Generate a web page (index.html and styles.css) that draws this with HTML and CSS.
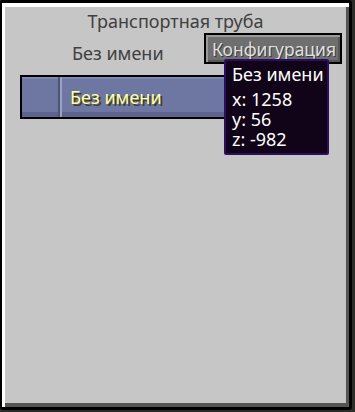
FILE: index.html
```html
<!DOCTYPE html>
<html lang="ru">
<head>
<meta charset="utf-8">
<title>Транспортная труба</title>
<link rel="stylesheet" href="styles.css">
</head>
<body>
<div class="panel">
  <div class="title">Транспортная труба</div>
  <div class="toolbar">
    <span class="name">Без имени</span>
    <div class="btn"><span class="btn-text">Конфигурация</span></div>
  </div>
  <div class="list">
    <div class="row">
      <div class="slot"></div>
      <div class="row-label">Без имени</div>
    </div>
  </div>
  <div class="tooltip">
    <div class="tip-title">Без имени</div>
    <div class="tip-line">x: 1258</div>
    <div class="tip-line">y: 56</div>
    <div class="tip-line">z: -982</div>
  </div>
</div>
</body>
</html>
```

FILE: styles.css
```css
html, body {
  margin: 0;
  padding: 0;
}
body {
  width: 355px;
  height: 412px;
  background: #2c2c29;
  font-family: "Noto Sans", "Open Sans", sans-serif;
  font-size: 18px;
  line-height: 20px;
  overflow: hidden;
}
.panel {
  position: relative;
  box-sizing: border-box;
  width: 352px;
  height: 410px;
  background: #c6c6c6;
  border-style: solid;
  border-color: #000;
  border-width: 3px 3px 3px 2px;
  border-radius: 3px;
  box-shadow: inset 3px 4px 0 #fff, inset -3px -4px 0 #555;
  padding-top: 8px;
}
.title {
  text-align: center;
  color: #404040;
}
.toolbar {
  display: flex;
  align-items: flex-start;
  margin-top: 2px;
  padding-left: 70px;
  padding-right: 7px;
}
.name {
  color: #404040;
  padding-top: 10px;
}
.btn {
  margin-left: auto;
  box-sizing: border-box;
  width: 138px;
  height: 31px;
  background: #6f6f6f;
  border: 2px solid #000;
  box-shadow: inset 2px 2px 0 #9a9a9a, inset -2px -2px 0 #575757;
  display: flex;
  align-items: center;
  justify-content: center;
  padding-left: 2px;
}
.btn-text {
  font-size: 17.5px;
  color: #e0e0e0;
  text-shadow: 1px 1px 0 #383838;
}
.list {
  margin: 11px 23px 0 18px;
}
.row {
  box-sizing: border-box;
  height: 44px;
  border: 2px solid #000;
  background: #6e76a2;
  box-shadow: inset 0 2px 0 #8088b2, inset 0 -5px 0 #5c6390;
  display: flex;
  align-items: center;
}
.slot {
  align-self: stretch;
  width: 36px;
  border-right: 2px solid #4e5478;
  box-shadow: 2px 0 0 #9ba2c4;
}
.row-label {
  padding-left: 10px;
  color: #ffffa0;
  text-shadow: 2px 2px 0 #3f3f28;
}
.tooltip {
  position: absolute;
  left: 222px;
  top: 56px;
  box-sizing: border-box;
  width: 105px;
  height: 96px;
  background: #110318;
  border: 2px solid #2d0d62;
  border-radius: 2px;
  padding: 3px 0 0 6px;
  color: #fff;
}
.tip-title {
  margin-bottom: 5px;
}
```
